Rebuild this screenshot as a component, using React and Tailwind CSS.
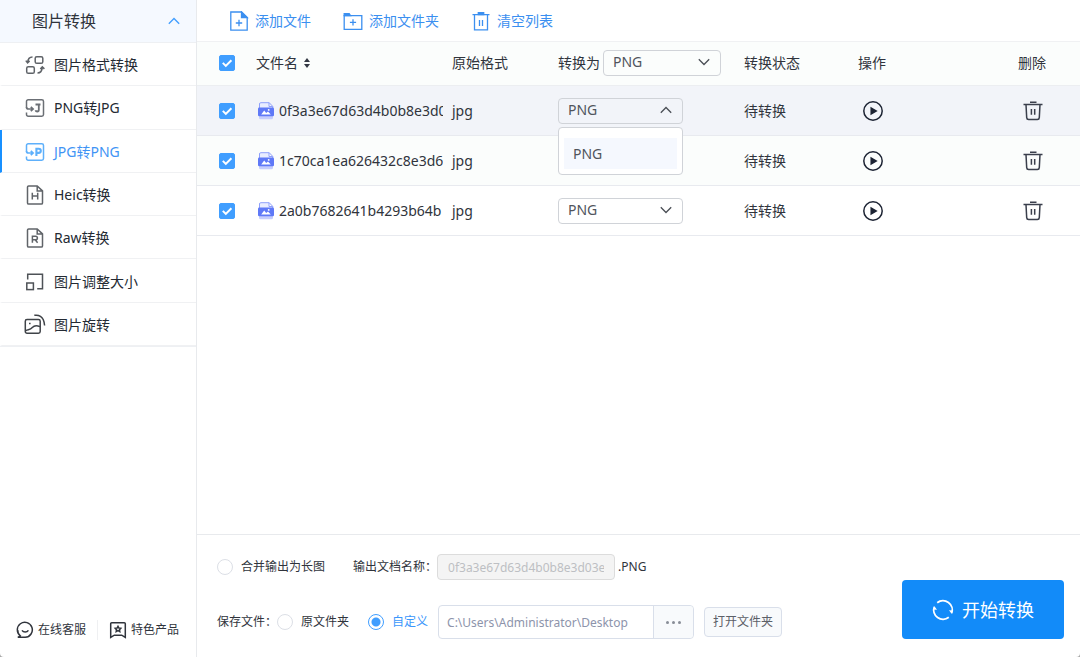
import { useState } from "react";

const line = { fill: "none", stroke: "currentColor", strokeWidth: 1.5 };

function FormatIcon() {
  return (
    <svg viewBox="0 0 20 20" className="size-5 text-[#5f6368]" {...line}>
      <rect x="10.2" y="1.7" width="7.6" height="6.6" rx="1.6" />
      <rect x="1.7" y="11.7" width="7.6" height="6.6" rx="1.6" />
      <path d="M7.5 2C4.600 2 2.900 3.800 2.600 7.600M.8 5.600l1.800 2.200 2-1.900" />
      <path d="M12.500 18c2.900 0 4.500-1.800 4.800-5.600M15.300 14.100l2-2.200 2.100 2" />
    </svg>
  );
}

function BoxArrow({ children }) {
  return (
    <svg viewBox="0 0 20 20" className="size-5" {...line}>
      <path d="M1.500 9.500V3.500a1.700 1.700 0 0 1 1.700-1.700h13.600a1.700 1.700 0 0 1 1.700 1.700v13a1.700 1.700 0 0 1-1.700 1.700H3.200a1.700 1.700 0 0 1-1.700-1.700v-2" />
      <path d="M1.500 9c0 1.500.5 2 2 2H8M5.800 8.800 8.100 11l-2.300 2.200" strokeWidth="1.700" />
      {children}
    </svg>
  );
}

function ToJpgIcon() {
  return (
    <span className="text-[#6b6f75]">
      <BoxArrow>
        <path d="M10.500 6.500h5M13.800 6.500v5.300c0 1.200-.6 1.700-1.600 1.700s-1.500-.5-1.700-1.300" strokeWidth="1.800" />
      </BoxArrow>
    </span>
  );
}

function ToPngIcon() {
  return (
    <span className="text-[#5eb0fb]">
      <BoxArrow>
        <path d="M11.400 14V6.700h2.300a2.100 2.100 0 0 1 0 4.200h-2.300" strokeWidth="2.100" />
      </BoxArrow>
    </span>
  );
}

function DocIcon({ children }) {
  return (
    <svg viewBox="0 0 20 20" className="size-5 text-[#606469]" {...line}>
      <path d="M12.200.9H3.700A1.200 1.200 0 0 0 2.500 2.100v15.800a1.200 1.200 0 0 0 1.200 1.200h12.600a1.200 1.200 0 0 0 1.200-1.200V5.900zM12.200.9v5h5.300" />
      {children}
    </svg>
  );
}

const HeicIcon = () => (
  <DocIcon>
    <path d="M7.300 7.800v6.700M12.700 7.800v6.700M7.300 11.100h5.400" />
  </DocIcon>
);

const RawIcon = () => (
  <DocIcon>
    <path d="M7.400 14.700V8.200h3.200a1.800 1.800 0 0 1 0 3.600H7.400M10.200 11.800l2.400 2.900" />
  </DocIcon>
);

function ResizeIcon() {
  return (
    <svg viewBox="0 0 20 20" className="size-5 text-[#4e5257]" {...line}>
      <path d="M2.700 7.500V2.200h14.800v14.600h-5.300" />
      <rect x="1.800" y="11" width="6.600" height="6.600" />
    </svg>
  );
}

function RotateImageIcon() {
  return (
    <svg viewBox="0 0 20 20" className="size-5 overflow-visible text-[#3f4348]" {...line}>
      <rect x=".3" y="4.500" width="14.900" height="13.700" rx="1.700" />
      <path d="M.8 15.500c3.500-1.200 4.500-.7 6.500-3 2-2.400 3.800-2.600 7.700-.9M4 8.600h1.600" />
      <path d="M9.300.3c4.200-.6 7.500 1.200 8.900 4.200.8 1.700 1.200 3.600 1.400 6" />
    </svg>
  );
}

function AddFileIcon() {
  return (
    <svg viewBox="0 0 20 20" className="size-5" fill="none" stroke="currentColor" strokeWidth="1.300">
      <path d="M12.500 1H1.800v18.200h16.400V6.500z" />
      <path d="M12.500 1v5.500h5.700z" fill="currentColor" />
      <path d="M10 8.800v6.400M6.800 12h6.400" />
    </svg>
  );
}

function AddFolderIcon() {
  return (
    <svg viewBox="0 0 20 20" className="size-5" fill="none" stroke="currentColor" strokeWidth="1.300">
      <path d="M1.200 4.600h17.600v13.700H1.200z" />
      <path d="M1.200 4.600V2.700h5l1.300 1.900z" fill="currentColor" />
      <path d="M10 8.300v6.200M6.900 11.400h6.200" />
    </svg>
  );
}

function ClearIcon() {
  return (
    <svg viewBox="0 0 20 20" className="size-5" fill="none" stroke="currentColor" strokeWidth="1.300">
      <path d="M1.500 3.700h17M3.500 3.700v15.200h13V3.700M8.500 9v6M11.500 9v6" />
      <path d="M7.300 1.600h5.400v2H7.300z" fill="currentColor" />
    </svg>
  );
}

function TrashIcon() {
  return (
    <svg viewBox="0 0 20 20" className="size-5" fill="none" stroke="currentColor" strokeWidth="1.500">
      <path d="M.5 3.500h19M7 1.300h6.500M3 3.500l.7 13.100a1.900 1.900 0 0 0 1.900 1.800h8.800a1.900 1.900 0 0 0 1.900-1.800L17 3.500M8.400 8v5.700M11.700 8v5.700" />
    </svg>
  );
}

function PlayIcon() {
  return (
    <svg viewBox="0 0 20 20" className="size-5" fill="none" stroke="currentColor" strokeWidth="1.500">
      <circle cx="10" cy="10" r="9.200" />
      <path d="M8.200 7v6l5-3z" fill="currentColor" />
    </svg>
  );
}

function ImageFileIcon() {
  return (
    <svg viewBox="0 0 18 18" className="size-[18px] shrink-0">
      <path d="M2.500 6V2A1.300 1.300 0 0 1 3.800.7h8.400l3.500 3.600V6M12 .7v3.800h3.700" fill="#e9edff" stroke="#8fa0fb" />
      <path d="M2 13h14v2.700a1.600 1.600 0 0 1-1.600 1.600H3.600A1.600 1.600 0 0 1 2 15.700z" fill="#c5cdfd" />
      <rect x="1" y="5.500" width="16" height="8.800" rx="1.200" fill="#5f79f7" />
      <path d="m4.200 12.600 3-4 2 2.500 1.800-1.700 2.800 3.200z" fill="#fff" />
      <circle cx="11.700" cy="7.900" r=".9" fill="#fff" />
    </svg>
  );
}

function SortIcon() {
  return (
    <svg viewBox="0 0 6 10" className="h-2.5 w-1.5" fill="#333844">
      <path d="M3 0l3 4H0zM3 10 0 6h6z" />
    </svg>
  );
}

function Chevron({ up, className }) {
  return (
    <svg viewBox="0 0 12 8" className={className} fill="none" stroke="currentColor" strokeWidth="1.300">
      <path d={up ? "M.8 6.800 6 1.500l5.200 5.300" : "M.8 1.200 6 6.500l5.200-5.300"} />
    </svg>
  );
}

function ChatIcon() {
  return (
    <svg viewBox="0 0 18 18" className="size-[18px]" fill="none" stroke="currentColor" strokeWidth="1.500">
      <path d="M4.300 14.800a7.500 7.500 0 1 1 4.900 1.500H1.800c1-.3 1.900-.8 2.500-1.500zM3.900 14.400C2.500 13 1.700 11 1.700 8.900M6 9.300c1.500 2.400 4.900 2.400 6.400 0" />
    </svg>
  );
}

function FeatureIcon() {
  return (
    <svg viewBox="0 0 18 18" className="size-[18px]" fill="none" stroke="currentColor" strokeWidth="1.500">
      <path d="M1.700 16.500V2.700a1 1 0 0 1 1-1h12.600a1 1 0 0 1 1 1v13.800l-3.600-2.300H5.300z" />
      <path d="m9 5.300.9 1.700 1.900.3-1.300 1.400.3 1.900L9 9.700l-1.800.9.300-1.900-1.300-1.400 1.900-.3z" />
    </svg>
  );
}

function ConvertIcon() {
  return (
    <svg viewBox="0 0 22 22" className="size-[22px]" fill="none" stroke="currentColor" strokeWidth="1.800">
      <path d="M5.200 3.700A9.300 9.300 0 0 1 19.700 14.200" />
      <path d="M16.800 18.300A9.300 9.300 0 0 1 2.300 7.800" />
      <path d="m17 11.200 2.600 3.600 1.600-3.300zM5 10.800 2.400 7.200.8 10.500z" fill="currentColor" stroke="none" />
    </svg>
  );
}

const menu = [
  ["图片格式转换", FormatIcon],
  ["PNG转JPG", ToJpgIcon],
  ["JPG转PNG", ToPngIcon],
  ["Heic转换", HeicIcon],
  ["Raw转换", RawIcon],
  ["图片调整大小", ResizeIcon],
  ["图片旋转", RotateImageIcon],
];

const files = [
  { name: "0f3a3e67d63d4b0b8e3d0", row: "bg-[#f2f4f9]" },
  { name: "1c70ca1ea626432c8e3d6", row: "bg-[#fbfdfc]" },
  { name: "2a0b7682641b4293b64b", row: "bg-white" },
];

function Check({ label }) {
  return (
    <span className="relative ml-[22px] block size-4">
      <input
        type="checkbox"
        defaultChecked
        aria-label={label}
        className="peer block size-4 appearance-none rounded-xs border border-[#c8ccd4] bg-white checked:border-[#409eff] checked:bg-[#409eff]"
      />
      <svg viewBox="0 0 16 16" className="pointer-events-none absolute inset-0 hidden size-4 peer-checked:block" fill="none" stroke="#fff" strokeWidth="2">
        <path d="m3.800 7.900 3 3 5.600-5.600" />
      </svg>
    </span>
  );
}

function FormatSelect({ label, open, onToggle, className }) {
  return (
    <span className={`relative block ${className}`}>
      <select
        aria-label={label}
        onMouseDown={onToggle}
        className="block h-[26px] w-full appearance-none rounded border border-[#d0d3d8] bg-transparent pb-0.5 pl-[9px] text-sm/5 text-[#50545c]"
      >
        <option>PNG</option>
      </select>
      <Chevron up={open} className="pointer-events-none absolute top-2 right-[11px] h-2 w-3 text-[#4a4e55]" />
      {open && (
        <ul role="listbox" className="absolute top-[29px] left-0 z-10 w-full rounded border border-[#d0d3d8] bg-white px-[5px] pt-2.5 pb-[5px]">
          <li role="option" aria-selected="true" className="flex h-[31px] items-center bg-[#f5f8fe] px-[9px] text-[#50545c]">
            PNG
          </li>
        </ul>
      )}
    </span>
  );
}

const radio =
  "size-4 shrink-0 appearance-none rounded-full border border-[#dcdfe6] bg-white checked:border-[#409eff] checked:bg-[radial-gradient(circle,#409eff_4px,#fff_5px)]";

export default function App() {
  const [active, setActive] = useState(2);
  const [openRow, setOpenRow] = useState(0);

  const toggle = (i) => (e) => {
    e.preventDefault();
    setOpenRow(openRow === i ? -1 : i);
  };

  return (
    <div className="bg-[#a8a8a8] font-['Noto_Sans','Noto_Sans_CJK_SC',sans-serif] text-sm/5 text-[#30343c]">
      <div className="flex min-h-screen rounded-b bg-white">
        <aside className="flex w-[197px] shrink-0 flex-col border-r border-[#e8eaed]">
          <button className="flex h-[43px] items-center justify-between border-b border-[#eef0f3] bg-[#f5f9ff] pr-4 pl-8 text-base/6">
            图片转换
            <Chevron up className="h-2 w-3 text-[#409eff]" />
          </button>
          <nav className="grid h-[304px] grid-rows-7 border-b border-[#eef0f3]">
            {menu.map(([text, Icon], i) => (
              <button
                key={text}
                onClick={() => setActive(i)}
                className={`flex items-center gap-[9px] border-b border-l-2 border-b-[#f0f1f3] pt-0.5 pl-[23px] ${
                  i === active ? "border-l-[#1890ff] text-[#3f94f5]" : "border-l-transparent text-[#242a33]"
                }`}
              >
                <Icon />
                {text}
              </button>
            ))}
          </nav>
          <div className="mt-auto mb-[17px] flex items-center pl-4 text-xs/5">
            <a href="#service" className="flex items-center gap-1">
              <ChatIcon />
              在线客服
            </a>
            <span className="mx-[11px] h-5 w-px bg-[#eff0f2]" />
            <a href="#products" className="flex items-center gap-1">
              <FeatureIcon />
              特色产品
            </a>
          </div>
        </aside>

        <main className="flex min-w-0 flex-1 flex-col">
          <div className="flex h-[42px] items-center gap-8 border-b border-[#f0f1f3] pl-8 text-[#3b8ff0]">
            <button className="flex items-center gap-1.5">
              <AddFileIcon />
              添加文件
            </button>
            <button className="flex items-center gap-1.5">
              <AddFolderIcon />
              添加文件夹
            </button>
            <button className="flex items-center gap-1.5">
              <ClearIcon />
              清空列表
            </button>
          </div>

          <table className="w-full table-fixed text-left">
            <colgroup>
              <col className="w-[59px]" />
              <col />
              <col className="w-[106px]" />
              <col className="w-[186px]" />
              <col className="w-[114px]" />
              <col className="w-40" />
              <col className="w-[62px]" />
            </colgroup>
            <thead>
              <tr className="h-[43px] border-b border-[#eceef1] bg-[#fbfdfc] *:font-normal">
                <th>
                  <Check label="全选" />
                </th>
                <th>
                  <span className="flex items-center gap-1.5">
                    文件名
                    <SortIcon />
                  </span>
                </th>
                <th>原始格式</th>
                <th>
                  <span className="flex items-center gap-[3px]">
                    转换为
                    <FormatSelect label="转换为" className="w-[118px]" />
                  </span>
                </th>
                <th>转换状态</th>
                <th>操作</th>
                <th>删除</th>
              </tr>
            </thead>
            <tbody>
              {files.map((file, i) => (
                <tr key={file.name} className={`h-[50px] border-b border-[#e8eaef] *:pt-0.5 ${file.row}`}>
                  <td>
                    <Check label={file.name} />
                  </td>
                  <td>
                    <span className="mr-[9px] flex items-center gap-1 overflow-hidden pl-px whitespace-nowrap">
                      <ImageFileIcon />
                      {file.name}
                    </span>
                  </td>
                  <td>jpg</td>
                  <td>
                    <FormatSelect label={file.name} open={openRow === i} onToggle={toggle(i)} className="w-[125px]" />
                  </td>
                  <td>待转换</td>
                  <td>
                    <button aria-label="转换" className="ml-[5px] block text-[#1c2333]">
                      <PlayIcon />
                    </button>
                  </td>
                  <td>
                    <button aria-label="删除" className="ml-[5px] block text-[#3a3f4c]">
                      <TrashIcon />
                    </button>
                  </td>
                </tr>
              ))}
            </tbody>
          </table>

          <footer className="mt-auto flex items-center justify-between border-t border-[#e8eaed] pt-[15px] pr-4 pb-[18px] pl-5 text-xs/5">
            <div className="flex flex-col gap-[21px]">
              <div className="flex h-[34px] items-center">
                <label className="flex items-center gap-2">
                  <input type="radio" name="merge" className={radio} />
                  合并输出为长图
                </label>
                <label className="ml-7 flex items-center">
                  输出文档名称：
                  <input
                    disabled
                    defaultValue="0f3a3e67d63d4b0b8e3d03e"
                    className="h-[26px] w-[178px] rounded border border-[#dcdcdc] bg-[#f4f4f4] px-2.5 text-[#bdbfc3]"
                  />
                </label>
                <span className="ml-[3px]">.PNG</span>
              </div>
              <div className="flex h-[34px] items-center">
                <span>保存文件：</span>
                <label className="flex items-center gap-2">
                  <input type="radio" name="target" className={radio} />
                  原文件夹
                </label>
                <label className="ml-[19px] flex items-center gap-2 text-[#3b97fb]">
                  <input type="radio" name="target" defaultChecked className={radio} />
                  自定义
                </label>
                <div className="ml-2.5 flex h-[34px] w-64 rounded border border-[#d9dfea] text-[#8d94ab]">
                  <input aria-label="保存路径" defaultValue="C:\Users\Administrator\Desktop" className="min-w-0 flex-1 pt-0.5 pl-2" />
                  <button aria-label="选择路径" className="flex w-10 items-center justify-center gap-[3px] rounded-r border-l border-[#d9dfea] bg-[#f8fafc]">
                    <span className="size-[3px] rounded-full bg-[#888d97]" />
                    <span className="size-[3px] rounded-full bg-[#888d97]" />
                    <span className="size-[3px] rounded-full bg-[#888d97]" />
                  </button>
                </div>
                <button className="ml-2.5 h-[30px] rounded border border-[#d9dfea] bg-[#f8fafc] px-2 text-[#5c6068]">打开文件夹</button>
              </div>
            </div>
            <button className="mt-[30px] flex h-[59px] w-[162px] items-center justify-center gap-2 rounded bg-[#128bf9] text-lg/6 text-white">
              <ConvertIcon />
              开始转换
            </button>
          </footer>
        </main>
      </div>
    </div>
  );
}
